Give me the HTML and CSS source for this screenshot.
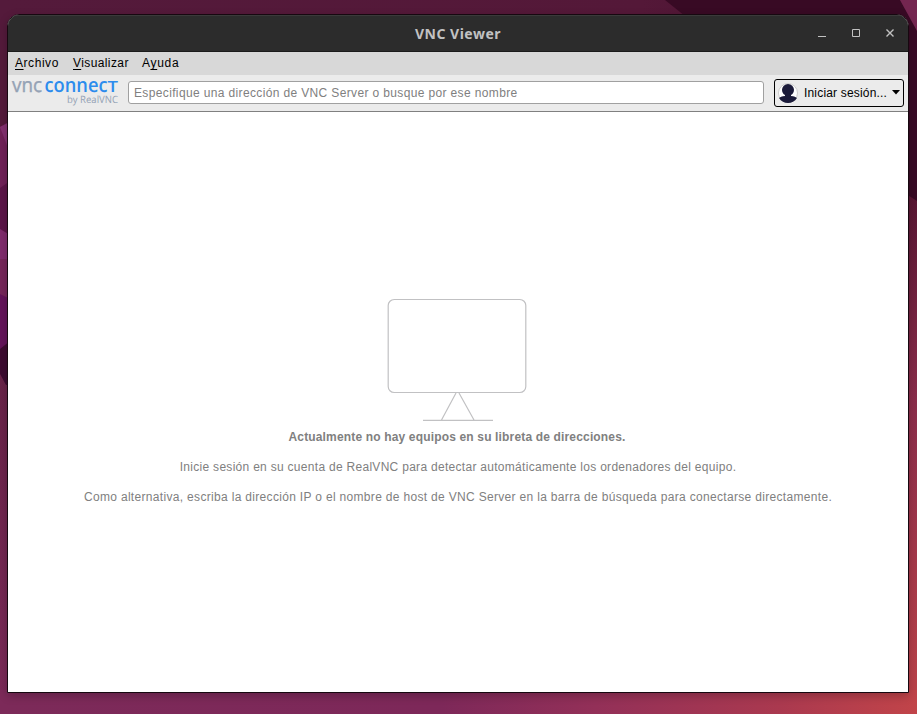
FILE: index.html
```html
<!DOCTYPE html>
<html lang="es">
<head>
<meta charset="utf-8">
<title>VNC Viewer</title>
<link rel="stylesheet" href="styles.css">
</head>
<body>
<svg class="wallpaper" viewBox="0 0 917 714" aria-hidden="true">
  <defs>
    <linearGradient id="top"><stop offset="0" stop-color="#541a3b"/><stop offset=".7" stop-color="#541838"/><stop offset="1" stop-color="#44102c"/></linearGradient>
    <linearGradient id="bottom"><stop offset="0" stop-color="#7c2a59"/><stop offset=".48" stop-color="#7d2859"/><stop offset=".65" stop-color="#933058"/><stop offset=".85" stop-color="#aa394f"/><stop offset="1" stop-color="#c14449"/></linearGradient>
    <linearGradient id="right" x2="0" y2="1"><stop offset="0" stop-color="#561532"/><stop offset=".4" stop-color="#8b2d4b"/><stop offset="1" stop-color="#be4349"/></linearGradient>
    <linearGradient id="left" x2="0" y2="1"><stop offset="0" stop-color="#682348"/><stop offset="1" stop-color="#7c2a59"/></linearGradient>
  </defs>
  <path fill="url(#top)" d="M0 0H917V714H0z"/>
  <path fill="#380a24" d="M665 0H900L917 30V204H860L690 20z"/>
  <path fill="#742650" d="M900 0H917V31z"/>
  <path fill="url(#right)" d="M900 190L917 201V714H900z"/>
  <path fill="#702158" d="M0 127L10 121V190H0z"/>
  <path fill="#843070" d="M0 127L8 123V148z"/>
  <path fill="#5c1548" d="M0 188L10 181V240H0z"/>
  <path fill="#812c6d" d="M0 229L10 235V262H0z"/>
  <path fill="#76265a" d="M0 259H10V302H0z"/>
  <path fill="#64135a" d="M0 294L10 299V352H0z"/>
  <path fill="#3d0b30" d="M0 349L10 341V390H0z"/>
  <path fill="url(#left)" d="M0 374L6 385H10V714H0z"/>
  <path fill="url(#bottom)" d="M0 690H917V714H0z"/>
</svg>
<div class="window">
  <header class="titlebar">
    <h1 class="title">VNC Viewer</h1>
    <svg class="controls" width="78" height="12" viewBox="0 0 78 12">
      <path d="M0 8.500H8M34.500 1.500h7v7h-7z"/>
      <path class="close" d="M68.500 1.500l7 7m0-7l-7 7"/>
    </svg>
  </header>
  <nav class="menu">
    <span class="m-file"><u>A</u>rchivo</span>
    <span class="m-view"><u>V</u>isualizar</span>
    <span class="m-help">A<u>y</u>uda</span>
  </nav>
  <div class="toolbar">
    <svg class="logo" width="108" height="34" viewBox="0 0 108 34">
      <text class="l-vnc" x="0" y="16.500" textLength="30" lengthAdjust="spacingAndGlyphs">vnc</text>
      <text class="l-connect" x="32.500" y="16.500" textLength="63" lengthAdjust="spacingAndGlyphs">connec</text>
      <text class="l-t" x="95.500" y="16.500" textLength="10.500" lengthAdjust="spacingAndGlyphs">T</text>
      <text class="l-by" x="55" y="28" textLength="51" lengthAdjust="spacingAndGlyphs">by RealVNC</text>
    </svg>
    <div class="search"><span>Especifique una dirección de VNC Server o busque por ese nombre</span></div>
    <div class="signin">
      <svg class="avatar" width="20" height="20" viewBox="0 0 20 20"><circle cx="10" cy="10" r="9.500" fill="#fff" stroke="#ccc"/><path fill="#1b1b3a" d="M4 6.800a6 5.800 0 0 1 12 0c0 2.600-1.300 4.300-3 5.300v.9c3 .3 5.300 1.200 6 2C17 18.400 13.500 20 10 20S3 18.400 1 15c.7-.8 3-1.700 6-2v-.9C5.300 11.100 4 9.400 4 6.800z"/></svg>
      <span class="s-label">Iniciar sesión...</span>
      <svg class="caret" width="8" height="5" viewBox="0 0 8 5"><path d="M0 0H8L4 4.500z"/></svg>
    </div>
  </div>
  <main class="content">
    <svg class="monitor" width="140" height="124" viewBox="0 0 140 124">
      <rect x="1.200" y="1.500" width="137.600" height="93" rx="6"/>
      <path d="M69 95L54.500 122M72 95L87 122M36 122.300H106"/>
    </svg>
    <p class="lead">Actualmente no hay equipos en su libreta de direcciones.</p>
    <p class="p1">Inicie sesión en su cuenta de RealVNC para detectar automáticamente los ordenadores del equipo.</p>
    <p class="p2">Como alternativa, escriba la dirección IP o el nombre de host de VNC Server en la barra de búsqueda para conectarse directamente.</p>
  </main>
</div>
</body>
</html>
```
FILE: styles.css
```css
* { box-sizing: border-box; }
body {
  margin: 0;
  width: 917px;
  height: 714px;
  overflow: hidden;
  padding: 14px 8px 0 7px;
  font: 12px/16px "Liberation Sans", Arial, sans-serif;
  color: #000;
}
.wallpaper { position: absolute; inset: 0; z-index: -1; width: 917px; height: 714px; }
.window {
  width: 902px;
  height: 679px;
  display: flex;
  flex-direction: column;
  border: 1px solid #170810;
  border-radius: 12px 12px 0 0;
  background: #fff;
  overflow: hidden;
  box-shadow: 0 3px 10px rgba(0, 0, 0, .22);
}
.titlebar {
  height: 37px;
  flex: none;
  display: grid;
  grid-template-columns: 1fr auto 1fr;
  align-items: center;
  background: #2c2c2c;
  border-top: 1px solid #3a3a3a;
  border-bottom: 1px solid #1b1b1b;
}
.title { grid-column: 2; margin: 1px 0 0; font: bold 14px/18px "Noto Sans", sans-serif; letter-spacing: .5px; color: #c2c2c2; white-space: nowrap; }
.controls { justify-self: end; margin-right: 12px; fill: none; stroke: #c2c2c2; stroke-width: 1; }
.close { stroke-width: 1.400; }
.menu { height: 23px; flex: none; display: flex; gap: 14px; padding: 3px 7px 0; background: #d8d8d8; }
.menu span { white-space: nowrap; }
u { text-underline-offset: 2px; text-decoration-thickness: 1px; text-decoration-skip-ink: none; }
.m-file { width: 44px; letter-spacing: .55px; }
.m-view { width: 55px; letter-spacing: .4px; }
.m-help { letter-spacing: .7px; }
.toolbar { height: 37px; flex: none; display: flex; align-items: flex-start; padding: 4px; background: #ebebeb; border-bottom: 1px solid #808080; }
.logo { flex: none; margin-top: -4px; overflow: visible; font-family: "Open Sans", sans-serif; text-rendering: geometricPrecision; }
.l-vnc { font-size: 20px; fill: #94a2b5; stroke: #94a2b5; stroke-width: .4; }
.l-connect { font-size: 20px; font-weight: 600; fill: #2c8ced; }
.l-t { font-size: 15.500px; font-weight: 600; fill: #2c8ced; }
.l-by { font-size: 10px; fill: #94a2b5; }
.search { width: 636px; height: 23px; margin: 2px 0 0 8px; padding: 3px 5px; border: 1px solid #a0a0a0; border-radius: 3px; background: #fff; color: #808080; white-space: nowrap; letter-spacing: .36px; }
.signin { width: 130px; height: 28px; margin-left: 10px; padding: 0 3px; display: flex; align-items: center; border: 1px solid #000; border-radius: 3px; white-space: nowrap; }
.s-label { width: 84px; margin: 0 4px 0 6px; letter-spacing: .18px; }
.caret { margin-bottom: 2px; }
.content { flex: 1; display: flex; flex-direction: column; align-items: center; padding-top: 186px; color: #808080; }
.monitor { flex: none; margin-right: 2px; fill: none; stroke: #c1c1c3; stroke-width: 1.200; }
.content p { margin: 7px 0; line-height: 16px; white-space: nowrap; }
.content .lead { font-weight: bold; letter-spacing: .16px; margin-right: 2px; }
.p1 { letter-spacing: .29px; }
.p2 { letter-spacing: .32px; }
```
